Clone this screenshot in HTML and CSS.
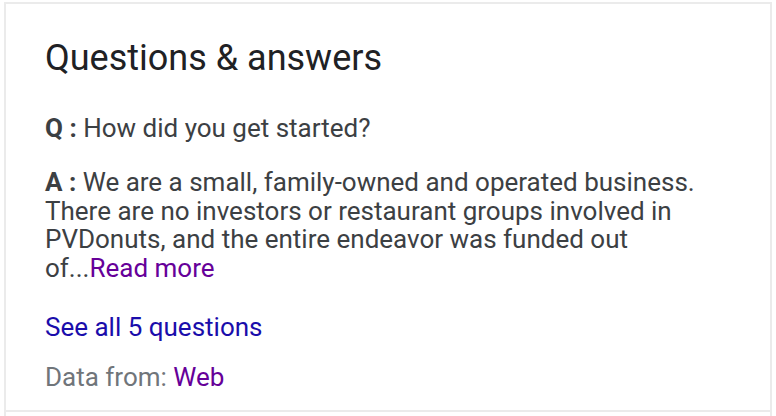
FILE: index.html
```html
<!DOCTYPE html>
<html>
<head>
<meta charset="utf-8">
<link rel="stylesheet" href="styles.css">
</head>
<body>
<div class="col">
  <div class="card">
    <h2 class="title">Questions &amp; answers</h2>
    <p class="q"><b>Q :</b> How did you get started?</p>
    <p class="a"><b>A :</b> We are a small, family-owned and operated business. There are no investors or restaurant groups involved in PVDonuts, and the entire endeavor was funded out of...<a class="more" href="#">Read more</a></p>
    <a class="all" href="#">See all 5 questions</a>
    <p class="src">Data from: <a class="web" href="#">Web</a></p>
  </div>
</div>
</body>
</html>
```
FILE: styles.css
```css
html, body {
  margin: 0;
  padding: 0;
  background: #fff;
}
body {
  font-family: Roboto, "Noto Sans", sans-serif;
  width: 776px;
  height: 416px;
  overflow: hidden;
}
.col {
  margin-left: 4px;
  width: 764px;
  height: 416px;
  border-left: 2px solid #ebebeb;
  border-right: 2px solid #ebebeb;
  box-sizing: content-box;
}
.card {
  margin-top: 2px;
  height: 406px;
  border-top: 2px solid #ebebeb;
  border-bottom: 2px solid #ebebeb;
  padding: 0 40px 0 39px;
}
.title {
  margin: 0;
  padding-top: 34px;
  font-size: 36px;
  line-height: 40px;
  font-weight: 400;
  color: #202124;
}
.q, .a {
  margin: 0;
  font-size: 26px;
  line-height: 28.5px;
  color: #3c4043;
}
.q b, .a b {
  font-weight: 700;
}
.q {
  margin-top: 36px;
}
.a {
  margin-top: 25.5px;
}
.more {
  color: #660099;
  text-decoration: none;
  white-space: nowrap;
}
.all {
  display: block;
  margin-top: 31px;
  font-size: 26px;
  line-height: 28.5px;
  color: #1a0dab;
  text-decoration: none;
}
.src {
  margin: 21.5px 0 0;
  font-size: 26px;
  line-height: 28.5px;
  color: #70757a;
}
.web {
  color: #660099;
  text-decoration: none;
}
```
